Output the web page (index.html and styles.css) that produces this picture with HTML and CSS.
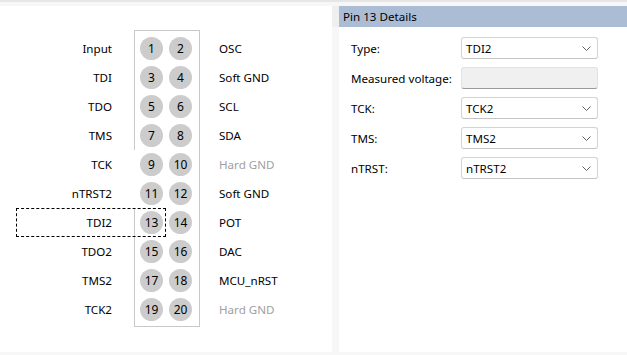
FILE: index.html
```html
<!DOCTYPE html>
<html lang="en">
<head>
  <meta charset="UTF-8" />
  <title>Pin Configuration</title>
  <link rel="stylesheet" href="styles.css">
</head>
<body>
  <div class="window">
    <!-- Left: connector pinout -->
    <div class="pinout-panel">
      <div class="pinout">
        <div class="labels labels-left">
          <div class="label">Input</div>
          <div class="label">TDI</div>
          <div class="label">TDO</div>
          <div class="label">TMS</div>
          <div class="label cover">TCK</div>
          <div class="label cover">nTRST2</div>
          <div class="label focused">TDI2</div>
          <div class="label">TDO2</div>
          <div class="label">TMS2</div>
          <div class="label">TCK2</div>
        </div>

        <div class="header-box">
          <div class="pin">1</div><div class="pin">2</div>
          <div class="pin">3</div><div class="pin">4</div>
          <div class="pin">5</div><div class="pin">6</div>
          <div class="pin">7</div><div class="pin">8</div>
          <div class="pin">9</div><div class="pin">10</div>
          <div class="pin">11</div><div class="pin">12</div>
          <div class="pin">13</div><div class="pin">14</div>
          <div class="pin">15</div><div class="pin">16</div>
          <div class="pin">17</div><div class="pin">18</div>
          <div class="pin">19</div><div class="pin">20</div>
        </div>

        <div class="labels labels-right">
          <div class="label">OSC</div>
          <div class="label">Soft GND</div>
          <div class="label">SCL</div>
          <div class="label">SDA</div>
          <div class="label muted">Hard GND</div>
          <div class="label">Soft GND</div>
          <div class="label">POT</div>
          <div class="label">DAC</div>
          <div class="label">MCU_nRST</div>
          <div class="label muted">Hard GND</div>
        </div>
      </div>
    </div>

    <div class="splitter"><div class="splitter-grip"></div></div>

    <!-- Right: details of the selected pin -->
    <div class="details">
      <div class="details-title">Pin 13 Details</div>
      <div class="details-form">
        <div class="field-label">Type:</div>
        <div class="combo">
          <span>TDI2</span>
          <svg width="9" height="5" viewBox="0 0 9 5"><path d="M0.5 0.5 L4.5 4.5 L8.5 0.5" fill="none" stroke="#5f5f5f" stroke-width="1"/></svg>
        </div>

        <div class="field-label">Measured voltage:</div>
        <div class="textbox"></div>

        <div class="field-label">TCK:</div>
        <div class="combo">
          <span>TCK2</span>
          <svg width="9" height="5" viewBox="0 0 9 5"><path d="M0.5 0.5 L4.5 4.5 L8.5 0.5" fill="none" stroke="#5f5f5f" stroke-width="1"/></svg>
        </div>

        <div class="field-label">TMS:</div>
        <div class="combo">
          <span>TMS2</span>
          <svg width="9" height="5" viewBox="0 0 9 5"><path d="M0.5 0.5 L4.5 4.5 L8.5 0.5" fill="none" stroke="#5f5f5f" stroke-width="1"/></svg>
        </div>

        <div class="field-label">nTRST:</div>
        <div class="combo">
          <span>nTRST2</span>
          <svg width="9" height="5" viewBox="0 0 9 5"><path d="M0.5 0.5 L4.5 4.5 L8.5 0.5" fill="none" stroke="#5f5f5f" stroke-width="1"/></svg>
        </div>
      </div>
    </div>
  </div>
</body>
</html>
```

FILE: styles.css
```css
/* Base */
body {
  margin: 0;
  font-family: 'Noto Sans', 'Liberation Sans', sans-serif;
  font-size: 11.6px;
  color: #000;
  background: #f7f7f7;
  border-top: 2px solid #e6e6e6;
  box-sizing: border-box;
}
*, *::before, *::after {
  box-sizing: inherit;
}

.window {
  display: flex;
  height: 353px;
  padding: 4px 0 3px;
}

/***** Pinout panel *****/
.pinout-panel {
  width: 332px;
  background: #fff;
}

.pinout {
  display: flex;
  align-items: flex-start;
  margin: 24px 0 0 16px;
}

.labels {
  padding-top: 4px;
}
.label {
  height: 29px;
  line-height: 29px;
  white-space: nowrap;
}

.labels-left {
  width: 118px;
  z-index: 1; /* labels sit over the header outline */
}
.labels-left .label {
  text-align: right;
  padding-right: 22px;
}
.labels-left .label.cover {
  background: #fff;
  margin-right: -1px;
  padding-right: 23px;
}
.labels-left .label.focused {
  margin-right: -32px;
  padding-right: 53px;
  border: 1px dashed #000;
  line-height: 27px;
}

.labels-right {
  margin-left: 19px;
}
.label.muted {
  color: #a0a0a0;
}

/* 2x10 connector outline */
.header-box {
  width: 66px;
  border: 1px solid #c9c9c9;
  padding: 3px 0 2px 5px;
  display: grid;
  grid-template-columns: 23px 23px;
  grid-auto-rows: 29px;
  column-gap: 6px;
}
.pin {
  width: 23px;
  height: 23px;
  margin-top: 3px;
  border-radius: 50%;
  background: #cccccc;
  text-align: center;
  line-height: 23px;
  font-size: 12px;
}

/***** Splitter *****/
.splitter {
  width: 7px;
}
.splitter-grip {
  height: 21px;
  background: #efefef;
}

/***** Details panel *****/
.details {
  flex: 1;
  background: #fff;
}
.details-title {
  height: 21px;
  line-height: 21px;
  padding-left: 4px;
  background: #abbdd4;
}
.details-form {
  display: grid;
  grid-template-columns: 110px 137px;
  grid-auto-rows: 22px;
  row-gap: 8px;
  align-items: center;
  padding: 10px 0 0 12px;
}

.combo {
  height: 22px;
  display: flex;
  align-items: center;
  justify-content: space-between;
  padding: 0 6px 0 4px;
  background: #fff;
  border: 1px solid #d3d3d3;
  border-bottom-color: #c4c4c4;
  border-radius: 3px;
}
.combo svg {
  display: block;
}

.textbox {
  height: 22px;
  background: #f0f0f0;
  border: 1px solid #e2e2e2;
  border-bottom-color: #9a9a9a;
  border-radius: 3px;
}
```
